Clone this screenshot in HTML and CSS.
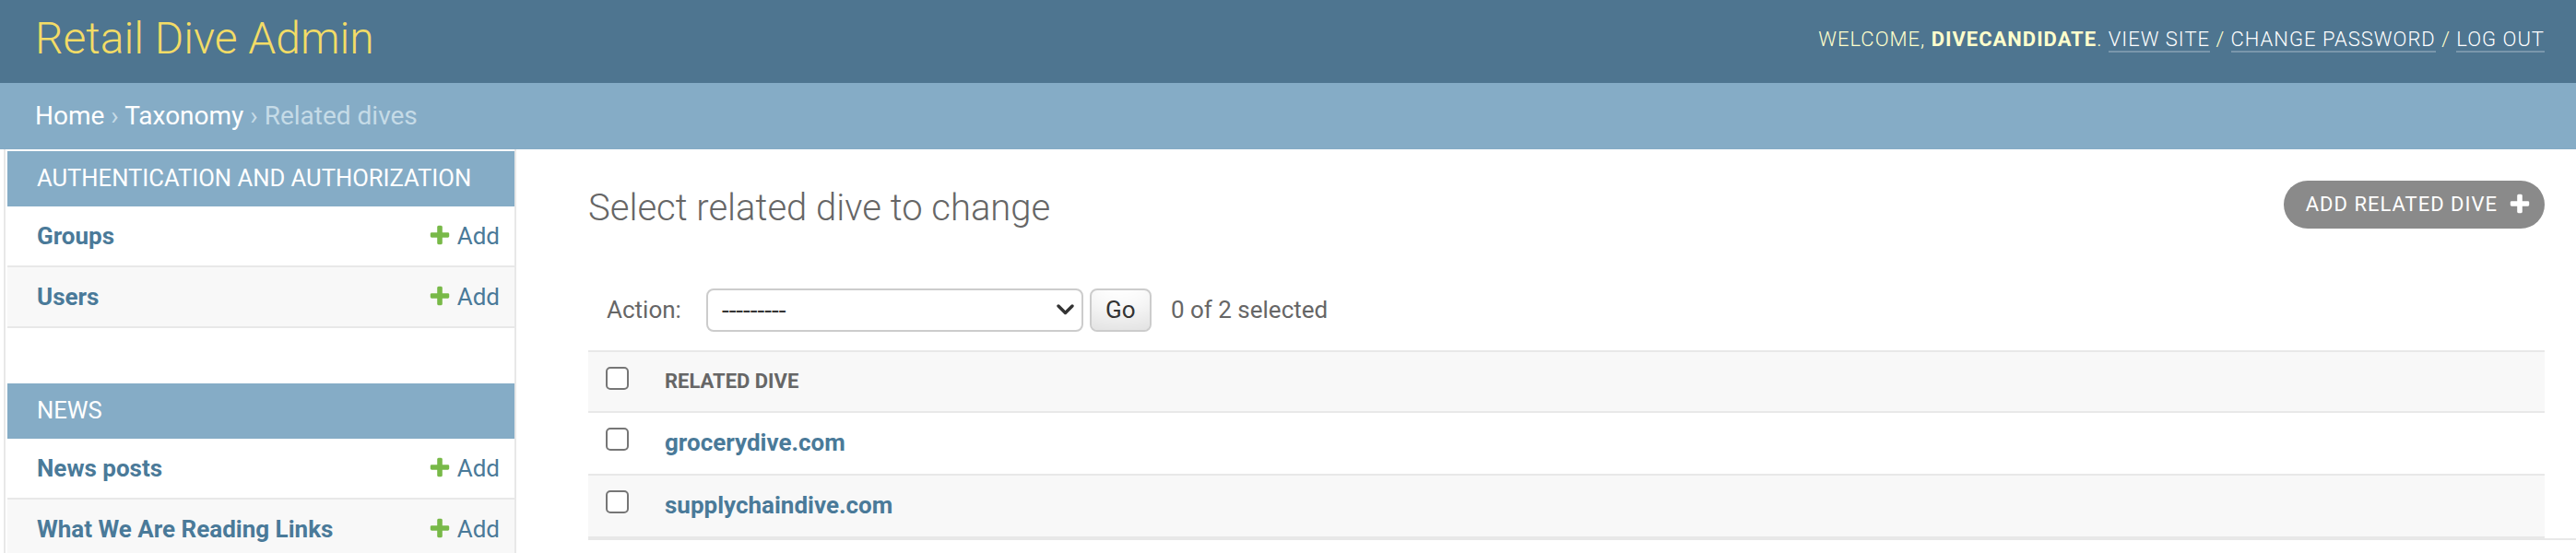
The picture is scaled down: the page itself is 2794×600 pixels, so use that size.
FILE: index.html
```html
<!DOCTYPE html>
<html lang="en">
<head>
<meta charset="utf-8">
<title>Select related dive to change | Retail Dive Admin</title>
<link rel="stylesheet" href="styles.css">
</head>
<body>
<header class="header">
  <h1 class="brand"><a href="#">Retail Dive Admin</a></h1>
  <div class="user-tools">Welcome, <strong>divecandidate</strong>. <a href="#">View site</a> / <a href="#">Change password</a> / <a href="#">Log out</a></div>
</header>
<nav class="breadcrumbs"><a href="#">Home</a> › <a href="#">Taxonomy</a> › Related dives</nav>
<div class="main">
  <div class="toggle"></div>
  <aside class="sidebar">
    <section class="module">
      <div class="caption">Authentication and Authorization</div>
      <div class="row"><a class="model" href="#">Groups</a><a class="addlink" href="#"><svg class="plus" viewBox="0 0 1792 1792"><path d="M1600 796v192q0 40-28 68t-68 28h-416v416q0 40-28 68t-68 28h-192q-40 0-68-28t-28-68v-416h-416q-40 0-68-28t-28-68v-192q0-40 28-68t68-28h416v-416q0-40 28-68t68-28h192q40 0 68 28t28 68v416h416q40 0 68 28t28 68z"/></svg>Add</a></div>
      <div class="row alt"><a class="model" href="#">Users</a><a class="addlink" href="#"><svg class="plus" viewBox="0 0 1792 1792"><path d="M1600 796v192q0 40-28 68t-68 28h-416v416q0 40-28 68t-68 28h-192q-40 0-68-28t-28-68v-416h-416q-40 0-68-28t-28-68v-192q0-40 28-68t68-28h416v-416q0-40 28-68t68-28h192q40 0 68 28t28 68v416h416q40 0 68 28t28 68z"/></svg>Add</a></div>
    </section>
    <section class="module">
      <div class="caption">News</div>
      <div class="row"><a class="model" href="#">News posts</a><a class="addlink" href="#"><svg class="plus" viewBox="0 0 1792 1792"><path d="M1600 796v192q0 40-28 68t-68 28h-416v416q0 40-28 68t-68 28h-192q-40 0-68-28t-28-68v-416h-416q-40 0-68-28t-28-68v-192q0-40 28-68t68-28h416v-416q0-40 28-68t68-28h192q40 0 68 28t28 68v416h416q40 0 68 28t28 68z"/></svg>Add</a></div>
      <div class="row alt"><a class="model" href="#">What We Are Reading Links</a><a class="addlink" href="#"><svg class="plus" viewBox="0 0 1792 1792"><path d="M1600 796v192q0 40-28 68t-68 28h-416v416q0 40-28 68t-68 28h-192q-40 0-68-28t-28-68v-416h-416q-40 0-68-28t-28-68v-192q0-40 28-68t68-28h416v-416q0-40 28-68t68-28h192q40 0 68 28t28 68v416h416q40 0 68 28t28 68z"/></svg>Add</a></div>
    </section>
  </aside>
  <main class="content">
    <div class="title-row">
      <h1 class="page-title">Select related dive to change</h1>
      <a class="object-tool" href="#"><span>Add related dive</span><svg class="plus-white" viewBox="0 0 1792 1792"><path d="M1600 796v192q0 40-28 68t-68 28h-416v416q0 40-28 68t-68 28h-192q-40 0-68-28t-28-68v-416h-416q-40 0-68-28t-28-68v-192q0-40 28-68t68-28h416v-416q0-40 28-68t68-28h192q40 0 68 28t28 68v416h416q40 0 68 28t28 68z"/></svg></a>
    </div>
    <div class="actions">
      <label class="action-label">Action:</label>
      <div class="select" role="combobox">---------<svg class="chevron" viewBox="0 0 19 12"><path d="M2 2 L9.5 9.5 L17 2"/></svg></div>
      <button class="go" type="button">Go</button>
      <span class="counter">0 of 2 selected</span>
    </div>
    <table class="results">
      <thead>
        <tr><th class="check"><input class="cb" type="checkbox"></th><th class="col-name">Related dive</th></tr>
      </thead>
      <tbody>
        <tr><td class="check"><input class="cb" type="checkbox"></td><th class="name"><a href="#">grocerydive.com</a></th></tr>
        <tr class="alt"><td class="check"><input class="cb" type="checkbox"></td><th class="name"><a href="#">supplychaindive.com</a></th></tr>
      </tbody>
    </table>
    <div class="paginator"></div>
  </main>
</div>
</body>
</html>
```

FILE: styles.css
```css
* { box-sizing: border-box; }
html, body { margin: 0; padding: 0; }
body {
  font-family: Roboto, "Liberation Sans", Arial, sans-serif;
  color: #333;
  background: #fff;
  width: 2794px;
  height: 600px;
  overflow: hidden;
}
a { text-decoration: none; color: #4a7a99; }

/* header */
.header {
  display: flex;
  justify-content: space-between;
  align-items: flex-start;
  height: 90px;
  padding: 14px 34px 0 38px;
  background: #4e7590;
}
.brand { margin: 0; font-size: 48px; font-weight: 300; line-height: 56px; }
.brand a { color: #f3dc66; }
.user-tools {
  margin-top: 16px;
  font-size: 22px;
  font-weight: 300;
  line-height: 26px;
  letter-spacing: 1px;
  text-transform: uppercase;
  color: #ffffcc;
}
.user-tools strong { font-weight: 700; }
.user-tools a { color: #fff; border-bottom: 2px solid rgba(255, 255, 255, 0.25); }

/* breadcrumbs */
.breadcrumbs {
  height: 72px;
  padding: 19px 34px 0 38px;
  background: #85acc6;
  color: #c5dbe7;
  font-size: 28px;
  line-height: 34px;
}
.breadcrumbs a { color: #fff; }

/* main */
.main { display: flex; align-items: stretch; }
.toggle { flex: 0 0 6px; border-right: 2px solid #e8e8e8; margin-right: 2px; }
.sidebar { flex: 0 0 552px; border-right: 2px solid #e8e8e8; padding-top: 2px; }
.module { margin-bottom: 60px; }
.caption {
  height: 60px;
  padding: 14px 16px 0 32px;
  background: #85acc6;
  color: #fff;
  font-size: 25.6px;
  line-height: 30px;
  white-space: nowrap;
  text-transform: uppercase;
}
.row {
  display: flex;
  justify-content: space-between;
  align-items: flex-start;
  padding: 16px 16px 16px 32px;
  font-size: 26px;
  line-height: 32px;
  border-bottom: 2px solid #e8e8e8;
}
.row.alt { background: #f8f8f8; }
.model { font-weight: 700; }
.plus { width: 26px; height: 26px; margin-right: 6px; vertical-align: -3px; fill: #78b948; }

/* content */
.content { flex: 1; min-width: 0; padding: 34px 34px 0 78px; }
.title-row { display: flex; justify-content: space-between; align-items: flex-start; }
.page-title { margin: 6px 0 0; font-size: 40px; font-weight: 300; line-height: 48px; color: #666; }
.object-tool {
  display: flex;
  align-items: center;
  height: 52px;
  padding: 0 14px 2px 24px;
  border-radius: 26px;
  background: #8a8a8a;
  color: #fff;
  font-size: 22px;
  letter-spacing: 1px;
  text-transform: uppercase;
}
.plus-white { width: 26px; height: 26px; margin-left: 11px; fill: #fff; }

.actions {
  display: flex;
  align-items: center;
  height: 88px;
  margin-top: 42px;
  padding: 0 20px;
  font-size: 26px;
  color: #666;
}
.select {
  display: flex;
  align-items: center;
  justify-content: space-between;
  width: 409px;
  height: 47px;
  margin-left: 27px;
  padding: 0 8px 0 15px;
  border: 2px solid #ccc;
  border-radius: 8px;
  background: #fff;
  font-size: 28px;
  color: #333;
}
.chevron { width: 19px; height: 12px; fill: none; stroke: #333; stroke-width: 3.4; stroke-linecap: round; stroke-linejoin: round; }
.go {
  width: 67px;
  height: 47px;
  margin: 0 0 0 7px;
  padding: 0;
  border: 2px solid #ccc;
  border-radius: 8px;
  background: #fff;
  box-shadow: inset 0 -30px 40px -20px rgba(0, 0, 0, 0.15);
  font-family: Roboto, "Liberation Sans", Arial, sans-serif;
  font-size: 26px;
  color: #333;
}
.counter { margin-left: 21px; }

.results { width: 100%; border-collapse: collapse; }
.results th, .results td {
  padding: 16px 20px;
  text-align: left;
  vertical-align: top;
  border-bottom: 2px solid #e8e8e8;
}
.results thead th {
  background: #f8f8f8;
  border-top: 2px solid #e8e8e8;
  font-size: 22px;
  font-weight: 700;
  line-height: 32px;
  color: #666;
  text-transform: uppercase;
}
.results tbody th { font-size: 26px; font-weight: 700; line-height: 34px; padding: 15px 20px 17px; }
.results tbody tr.alt { background: #f8f8f8; }
.results .check { width: 63px; padding: 16px 0 0; }
.cb {
  appearance: none;
  display: block;
  width: 25px;
  height: 25px;
  margin: 0 auto;
  border: 2px solid #767676;
  border-radius: 5px;
  background: #fff;
}
.paginator { height: 2px; margin-right: -34px; background: #e8e8e8; }
```
